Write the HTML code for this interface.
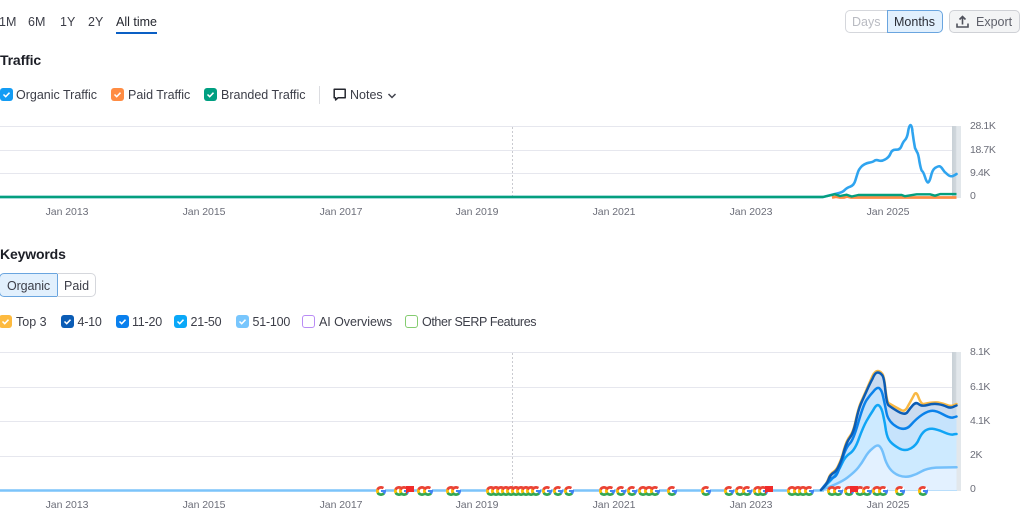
<!DOCTYPE html>
<html><head><meta charset="utf-8">
<style>
html,body{margin:0;padding:0;background:#fff}
body{width:1024px;height:519px;overflow:hidden;position:relative;font-family:"Liberation Sans",sans-serif;color:#333640}
#w{position:absolute;left:0;top:0;width:1024px;height:519px;filter:blur(.3px)}
.t{position:absolute;white-space:nowrap;font-size:12.5px;line-height:16px;color:#3c3e48}
.n{letter-spacing:-.22px}
.h{position:absolute;font-size:14px;font-weight:700;line-height:18px;color:#1c1e26;letter-spacing:-.15px}
.x{position:absolute;font-size:10.5px;line-height:14px;color:#6c6e79;width:70px;text-align:center;letter-spacing:-.05px}
.y{position:absolute;left:970px;font-size:10.5px;line-height:14px;color:#6c6e79;letter-spacing:-.4px}
.c{position:absolute;width:13px;height:13px;border-radius:3px;box-sizing:border-box}
.c svg{position:absolute;left:0;top:0}
.g{position:absolute;top:486px;width:9.500px;height:9.500px;border-radius:50%;background:radial-gradient(circle,#fff 2.1px,rgba(255,255,255,0) 2.4px),conic-gradient(#ea4335 0 40deg,#fff 40deg 72deg,#4285f4 72deg 135deg,#34a853 135deg 240deg,#fbbc05 240deg 292deg,#ea4335 292deg 360deg)}
.gb{position:absolute;top:489.800px;width:4.500px;height:2px;background:#4285f4}
</style></head><body><div id="w">

<div class="t" style="left:-1px;top:14px">1M</div>
<div class="t" style="left:28px;top:14px">6M</div>
<div class="t" style="left:60px;top:14px">1Y</div>
<div class="t" style="left:88px;top:14px">2Y</div>
<div class="t" style="left:116px;top:14px;color:#25272f">All time</div>
<div style="position:absolute;left:116px;top:32px;width:41px;height:2px;background:#0a5fc4"></div>

<div style="position:absolute;left:845px;top:10px;width:43px;height:23px;box-sizing:border-box;border:1px solid #d5d7dc;border-right:0;border-radius:5px 0 0 5px;background:#fff"></div>
<div class="t" style="left:852px;top:14px;color:#b9bbc2">Days</div>
<div style="position:absolute;left:887px;top:10px;width:56px;height:23px;box-sizing:border-box;border:1px solid #6aa5df;border-radius:0 5px 5px 0;background:#e2f0fd"></div>
<div class="t" style="left:894px;top:14px;color:#2b2d36">Months</div>
<div style="position:absolute;left:949px;top:10px;width:71px;height:23px;box-sizing:border-box;border:1px solid #cfd1d6;border-radius:5px;background:#f3f4f5"></div>
<svg style="position:absolute;left:955px;top:14px" width="15" height="15" viewBox="0 0 15 15" fill="none" stroke="#50525c" stroke-width="1.600"><path d="M2 9.500v3.500h11V9.500M7.500 10.500V2.500M4.500 5.500l3-3 3 3"/></svg>
<div class="t" style="left:976px;top:14px;color:#5e606a">Export</div>

<div class="h" style="left:0;top:51px">Traffic</div>

<div class="c" style="left:0;top:88px;background:#139cf4"><svg width="13" height="13"><path d="M3.500 6.500l2.200 2.200L9.500 4.700" fill="none" stroke="#fff" stroke-width="1.500"/></svg></div>
<div class="t" style="left:16px;top:87px">Organic Traffic</div>
<div class="c" style="left:111px;top:88px;background:#ff8c43"><svg width="13" height="13"><path d="M3.500 6.500l2.200 2.200L9.500 4.700" fill="none" stroke="#fff" stroke-width="1.500"/></svg></div>
<div class="t" style="left:128px;top:87px">Paid Traffic</div>
<div class="c" style="left:204px;top:88px;background:#009f81"><svg width="13" height="13"><path d="M3.500 6.500l2.200 2.200L9.500 4.700" fill="none" stroke="#fff" stroke-width="1.500"/></svg></div>
<div class="t" style="left:221px;top:87px">Branded Traffic</div>
<div style="position:absolute;left:319px;top:86px;width:1px;height:18px;background:#dcdde1"></div>
<svg style="position:absolute;left:333px;top:88px" width="14" height="14" viewBox="0 0 14 14" fill="none" stroke="#25272f" stroke-width="1.500"><path d="M1.200 1.200h11v8.600H5L2.600 12V9.800H1.200z" stroke-linejoin="round"/></svg>
<div class="t" style="left:350px;top:87px">Notes</div>
<svg style="position:absolute;left:387px;top:92px" width="10" height="8" viewBox="0 0 10 8" fill="none" stroke="#42444e" stroke-width="1.500"><path d="M1.500 2L5 5.500 8.500 2"/></svg>

<svg style="position:absolute;left:0;top:0" width="1024" height="519" viewBox="0 0 1024 519" fill="none">
<defs><linearGradient id="b"><stop offset="0" stop-color="#c8d0d6"/><stop offset=".45" stop-color="#d0d7dc"/><stop offset=".5" stop-color="#e2e7eb"/><stop offset="1" stop-color="#e2e7eb"/></linearGradient></defs>
<path d="M0 126.500H957M0 150.500H957M0 173.500H957" stroke="#e6e7ee"/>
<path d="M512.500 127V197" stroke="#c9cad0" stroke-dasharray="2 2"/>
<rect x="952" y="126" width="9" height="72" fill="url(#b)"/>
<path d="M0 197H823Q835 194 839 193Q843 192 844.700 190Q846.500 188 850 186.700Q854 185.500 855.500 180Q857 175 858 172Q859 169 862 166Q865 163.500 869 162.700Q873 162 874.500 160.700Q876 159.500 878.700 160.500Q881.500 161.500 885 159.500Q889 157.500 890.500 153.500Q892 149.500 896 149.700Q900 150 901.500 146Q903 142 905 140Q907 138 908 132.500Q909 125 910.500 125Q912 125 912.500 132Q913.500 140 915 148Q916 150 917 152Q918.300 153.500 919.500 162Q921 170 922 171Q923.300 171.700 925 177Q926.700 182.700 928 182.500Q929.500 182 931 176Q932.300 170 935 168Q938.300 166 939.500 166.300Q941 166.700 942.500 169Q944 171.700 947 174Q950 177 953 176Q955 175 956.500 174" stroke="#2fa4ef" stroke-width="2.600" stroke-linejoin="round" stroke-linecap="round"/>
<path d="M832 197.500L836 196.800L840 197.500H844L847 196.500L851 197.500H956.500" stroke="#ff8c43" stroke-width="2.800"/>
<path d="M0 197H823L835 194.200L840 196L846.700 194.700L851.700 196.500L858.300 195H901.700L905 196.200L916.700 194.300H930L935 195.700L940 194.100H956.500" stroke="#049f7d" stroke-width="2.400" stroke-linejoin="round"/>

<path d="M0 352.500H957M0 387.500H957M0 421.500H957M0 456.500H957" stroke="#e6e7ee"/>
<path d="M512.500 353V490" stroke="#c9cad0" stroke-dasharray="2 2"/>
<rect x="952" y="352" width="9" height="139" fill="url(#b)"/>

<path fill="#c5d8ef" fill-opacity=".92" d="M821 490Q826.500 485 828.300 480Q830 475 833.300 473Q836.700 471 839 465.500Q841.700 460 844 451Q846.700 441.700 850 437.500Q853.300 433.300 855.800 421.700Q858.300 410 860.800 404Q863.300 398.300 866.600 391Q870 383.300 872.500 378.800Q875 372.500 877.500 372.500Q880 372.500 882 375Q884 376.700 885.300 390Q886.700 403.300 888.300 405Q890 406.700 897.500 411.200Q905 415.700 907.500 412Q910 408.300 913 405Q916 401.700 918.800 404.200Q921.700 406.700 927.500 405Q933.300 403.300 938.300 404.200Q943.300 405 946.600 406.600Q950 408.300 953 407Q955 406 956.500 405.500V490Z"/>
<path fill="#c6e3fc" d="M821 490Q830 478.300 833.300 477.500Q836.700 476.700 839 469Q841.700 461.700 844 454Q846.700 446.700 850 443.300Q853.300 440 858.300 422.500Q863.300 405 866.600 400Q870 395 873.300 391.600Q876.700 387 879 388Q881.700 389.500 883.300 397.500Q885 405 886.600 413.300Q888.300 421.700 896.600 426.700Q905 431.700 910.800 425Q916.700 418.300 922.500 414.500Q928.300 410.700 932.500 410.700Q936.700 410.700 943.300 414.500Q950 418.300 953 417.500Q955 417 956.500 416.500V490Z"/>
<path fill="#cdeaff" d="M821 490Q833.300 478.300 836.600 473.300Q840 468.300 842.500 462.500Q845 456.700 850 453.300Q855 450 859 438.300Q863.300 426.700 866.600 420.800Q870 415 873.300 410Q876.700 403.500 879 405.500Q881.700 407.500 883.300 415.800Q885 423.300 886 430.800Q887.300 438.300 890.300 441.600Q893.300 445 899 448.300Q905 451.700 911 448.300Q916.700 445 919 439Q921.700 433.300 925 430.800Q928.300 428.300 932.500 428.800Q936.700 429.300 943.300 432Q950 435 953 434.500Q955 434 956.500 434V490Z"/>
<path fill="#e3f1ff" d="M821 490Q840 483.300 847.500 477.500Q855 471.700 858.300 467.500Q861.700 463.300 865 457.500Q868.300 451.700 872.500 448.500Q876.700 444.500 879 445.800Q881.700 447.500 884 455.800Q886 463.300 889.600 468.300Q893.300 473.300 899 475.500Q905 477.700 911 476Q916.700 474.300 921.700 471.300Q926.700 468.300 936 467.600L956.500 467.300V490Z"/>

<path d="M0 490.500H824" stroke="#7cc4fa" stroke-width="2.400"/>
<path d="M824 490.500H957" stroke="#b9defb" stroke-width="1"/>
<g stroke-width="2.500" stroke-linejoin="round" stroke-linecap="round">
<path stroke="#f8b844" d="M821 490Q826.500 484 828.300 479Q830 474 833.300 472Q836.700 470 839 464Q841.700 458.500 844 449.500Q846.700 440 850 436Q853.300 432 855.800 420Q858.300 408.500 860.800 402.500Q863.300 397 866.600 389.500Q870 381.500 872.500 376Q875 371 877.500 371Q880 371 882 373.500Q884 375 885.300 388Q886.700 400 888.300 403Q895 407 901 410Q905 412.500 908 406Q912 399 914 395Q916 391 918 396Q921 404.500 924 404Q933 402 938 402.500Q943 403.500 947 405Q950 406.500 953 405.500Q955 404.500 956.500 404"/>
<path stroke="#74c0fb" d="M821 490Q840 483.300 847.500 477.500Q855 471.700 858.300 467.500Q861.700 463.300 865 457.500Q868.300 451.700 872.500 448.500Q876.700 444.500 879 445.800Q881.700 447.500 884 455.800Q886 463.300 889.600 468.300Q893.300 473.300 899 475.500Q905 477.700 911 476Q916.700 474.300 921.700 471.300Q926.700 468.300 936 467.600L956.500 467.300"/>
<path stroke="#10a5f5" d="M821 490Q833.300 478.300 836.600 473.300Q840 468.300 842.500 462.500Q845 456.700 850 453.300Q855 450 859 438.300Q863.300 426.700 866.600 420.800Q870 415 873.300 410Q876.700 403.500 879 405.500Q881.700 407.500 883.300 415.800Q885 423.300 886 430.800Q887.300 438.300 890.300 441.600Q893.300 445 899 448.300Q905 451.700 911 448.300Q916.700 445 919 439Q921.700 433.300 925 430.800Q928.300 428.300 932.500 428.800Q936.700 429.300 943.300 432Q950 435 953 434.500Q955 434 956.500 434"/>
<path stroke="#0b82ea" d="M821 490Q830 478.300 833.300 477.500Q836.700 476.700 839 469Q841.700 461.700 844 454Q846.700 446.700 850 443.300Q853.300 440 858.300 422.500Q863.300 405 866.600 400Q870 395 873.300 391.600Q876.700 387 879 388Q881.700 389.500 883.300 397.500Q885 405 886.600 413.300Q888.300 421.700 896.600 426.700Q905 431.700 910.800 425Q916.700 418.300 922.500 414.500Q928.300 410.700 932.500 410.700Q936.700 410.700 943.300 414.500Q950 418.300 953 417.500Q955 417 956.500 416.500"/>
<path stroke="#0c5cb4" d="M821 490Q826.500 485 828.300 480Q830 475 833.300 473Q836.700 471 839 465.500Q841.700 460 844 451Q846.700 441.700 850 437.500Q853.300 433.300 855.800 421.700Q858.300 410 860.800 404Q863.300 398.300 866.600 391Q870 383.300 872.500 378.800Q875 372.500 877.500 372.500Q880 372.500 882 375Q884 376.700 885.300 390Q886.700 403.300 888.300 405Q890 406.700 897.500 411.200Q905 415.700 907.500 412Q910 408.300 913 405Q916 401.700 918.800 404.200Q921.700 406.700 927.500 405Q933.300 403.300 938.300 404.200Q943.300 405 946.600 406.600Q950 408.300 953 407Q955 406 956.500 405.500"/>
</g>
</svg>

<div class="x" style="left:32px;top:205px">Jan 2013</div>
<div class="x" style="left:169px;top:205px">Jan 2015</div>
<div class="x" style="left:306px;top:205px">Jan 2017</div>
<div class="x" style="left:442px;top:205px">Jan 2019</div>
<div class="x" style="left:579px;top:205px">Jan 2021</div>
<div class="x" style="left:716px;top:205px">Jan 2023</div>
<div class="x" style="left:853px;top:205px">Jan 2025</div>
<div class="y" style="top:119px">28.1K</div>
<div class="y" style="top:143px">18.7K</div>
<div class="y" style="top:166px">9.4K</div>
<div class="y" style="top:189px">0</div>

<div class="h" style="left:0;top:245px">Keywords</div>

<div style="position:absolute;left:-1px;top:273px;width:59px;height:24px;box-sizing:border-box;border:1px solid #6aa5df;border-radius:5px 0 0 5px;background:#e2f0fd"></div>
<div class="t" style="left:7px;top:278px;letter-spacing:-.1px">Organic</div>
<div style="position:absolute;left:57px;top:273px;width:39px;height:24px;box-sizing:border-box;border:1px solid #d5d7dc;border-left:0;border-radius:0 5px 5px 0"></div>
<div class="t" style="left:64px;top:278px">Paid</div>

<div class="c" style="left:-1px;top:315px;background:#fdba3f"><svg width="13" height="13"><path d="M3.500 6.500l2.200 2.200L9.500 4.700" fill="none" stroke="#fff" stroke-width="1.500"/></svg></div>
<div class="t" style="left:16px;top:314px">Top 3</div>
<div class="c" style="left:61px;top:315px;background:#0b5cb5"><svg width="13" height="13"><path d="M3.500 6.500l2.200 2.200L9.500 4.700" fill="none" stroke="#fff" stroke-width="1.500"/></svg></div>
<div class="t n" style="left:77.500px;top:314px">4-10</div>
<div class="c" style="left:116px;top:315px;background:#0a80ee"><svg width="13" height="13"><path d="M3.500 6.500l2.200 2.200L9.500 4.700" fill="none" stroke="#fff" stroke-width="1.500"/></svg></div>
<div class="t n" style="left:132px;top:314px">11-20</div>
<div class="c" style="left:174px;top:315px;background:#0aa8f8"><svg width="13" height="13"><path d="M3.500 6.500l2.200 2.200L9.500 4.700" fill="none" stroke="#fff" stroke-width="1.500"/></svg></div>
<div class="t n" style="left:190.500px;top:314px">21-50</div>
<div class="c" style="left:236px;top:315px;background:#78c6fd"><svg width="13" height="13"><path d="M3.500 6.500l2.200 2.200L9.500 4.700" fill="none" stroke="#fff" stroke-width="1.500"/></svg></div>
<div class="t n" style="left:252.500px;top:314px">51-100</div>
<div class="c" style="left:302px;top:315px;border:1.500px solid #b98cf5"></div>
<div class="t" style="left:319px;top:314px;letter-spacing:-.05px">AI Overviews</div>
<div class="c" style="left:405px;top:315px;border:1.500px solid #84cc70"></div>
<div class="t" style="left:422px;top:314px;letter-spacing:-.38px">Other SERP Features</div>

<div class="x" style="left:32px;top:498px">Jan 2013</div>
<div class="x" style="left:169px;top:498px">Jan 2015</div>
<div class="x" style="left:306px;top:498px">Jan 2017</div>
<div class="x" style="left:442px;top:498px">Jan 2019</div>
<div class="x" style="left:579px;top:498px">Jan 2021</div>
<div class="x" style="left:716px;top:498px">Jan 2023</div>
<div class="x" style="left:853px;top:498px">Jan 2025</div>
<div class="y" style="top:345px">8.1K</div>
<div class="y" style="top:380px">6.1K</div>
<div class="y" style="top:414px">4.1K</div>
<div class="y" style="top:448px">2K</div>
<div class="y" style="top:482px">0</div>

<i class="g" style="left:376px"></i><i class="gb" style="left:381px"></i>
<i class="g" style="left:394px"></i>
<i class="g" style="left:399px"></i><i class="gb" style="left:404px"></i>
<i class="g" style="left:417px"></i>
<i class="g" style="left:423px"></i><i class="gb" style="left:428px"></i>
<i class="g" style="left:446px"></i>
<i class="g" style="left:451px"></i><i class="gb" style="left:456px"></i>
<i class="g" style="left:486px"></i><i class="g" style="left:491px"></i><i class="g" style="left:496px"></i><i class="g" style="left:501px"></i><i class="g" style="left:506px"></i><i class="g" style="left:511px"></i><i class="g" style="left:516px"></i><i class="g" style="left:521px"></i><i class="g" style="left:526px"></i>
<i class="g" style="left:531px"></i><i class="gb" style="left:536px"></i>
<i class="g" style="left:542px"></i><i class="gb" style="left:547px"></i>
<i class="g" style="left:553px"></i><i class="gb" style="left:558px"></i>
<i class="g" style="left:564px"></i><i class="gb" style="left:569px"></i>
<i class="g" style="left:599px"></i>
<i class="g" style="left:605px"></i><i class="gb" style="left:610px"></i>
<i class="g" style="left:616px"></i><i class="gb" style="left:621px"></i>
<i class="g" style="left:627px"></i><i class="gb" style="left:632px"></i>
<i class="g" style="left:638px"></i><i class="g" style="left:644px"></i>
<i class="g" style="left:650px"></i><i class="gb" style="left:655px"></i>
<i class="g" style="left:667px"></i><i class="gb" style="left:672px"></i>
<i class="g" style="left:701px"></i><i class="gb" style="left:706px"></i>
<i class="g" style="left:724px"></i><i class="gb" style="left:729px"></i>
<i class="g" style="left:735px"></i>
<i class="g" style="left:742px"></i><i class="gb" style="left:747px"></i>
<i class="g" style="left:753px"></i>
<i class="g" style="left:758px"></i><i class="gb" style="left:763px"></i>
<i class="g" style="left:787px"></i><i class="g" style="left:793px"></i><i class="g" style="left:798px"></i>
<i class="g" style="left:804px"></i><i class="gb" style="left:809px"></i>
<i class="g" style="left:827px"></i>
<i class="g" style="left:833px"></i><i class="gb" style="left:838px"></i>
<i class="g" style="left:844px"></i>
<i class="g" style="left:855px"></i>
<i class="g" style="left:862px"></i><i class="gb" style="left:867px"></i>
<i class="g" style="left:872px"></i>
<i class="g" style="left:878px"></i><i class="gb" style="left:883px"></i>
<i class="g" style="left:895px"></i><i class="gb" style="left:900px"></i>
<i class="g" style="left:918px"></i><i class="gb" style="left:923px"></i>

<svg style="position:absolute;left:0;top:0" width="1024" height="519" fill="none">
<path d="M406 486h8v6h-6l-2 2z" fill="#f02b2b"/>
<path d="M765 486h8v6h-6l-2 2z" fill="#f02b2b"/>
<path d="M850 486h8v6h-6l-2 2z" fill="#f02b2b"/>
</svg>
</div></body></html>
